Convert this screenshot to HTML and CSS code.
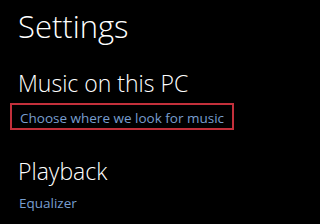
FILE: index.html
```html
<!DOCTYPE html>
<html>
<head>
<meta charset="utf-8">
<link rel="stylesheet" href="styles.css">
</head>
<body>
<div class="page">
  <h1 class="title">Settings</h1>
  <h2 class="section">Music on this PC</h2>
  <div class="highlight"><a class="link">Choose where we look for music</a></div>
  <h2 class="section playback">Playback</h2>
  <a class="link eq">Equalizer</a>
</div>
</body>
</html>
```
FILE: styles.css
```css
html, body {
  margin: 0;
  padding: 0;
  background: #000;
}
.page {
  width: 320px;
  height: 224px;
  overflow: hidden;
  font-family: "Open Sans", "Liberation Sans", sans-serif;
  color: #fff;
  padding-top: 11px;
  box-sizing: border-box;
}
.title {
  margin: 0 0 0 18px;
  font-size: 31px;
  line-height: 31px;
  font-weight: 300;
}
.section {
  margin: 30px 0 0 18px;
  font-size: 23px;
  line-height: 23px;
  font-weight: 300;
}
.section.playback {
  margin-top: 30px;
}
.highlight {
  display: inline-block;
  margin: 8px 0 0 10px;
  border: 2px solid #c3303b;
  padding: 3px 8px 0 8px;
  line-height: 19px;
}
.link {
  color: #789ecf;
  font-size: 13.5px;
  font-weight: 400;
}
.eq {
  display: block;
  margin: 13px 0 0 19px;
  line-height: 14px;
}
```
